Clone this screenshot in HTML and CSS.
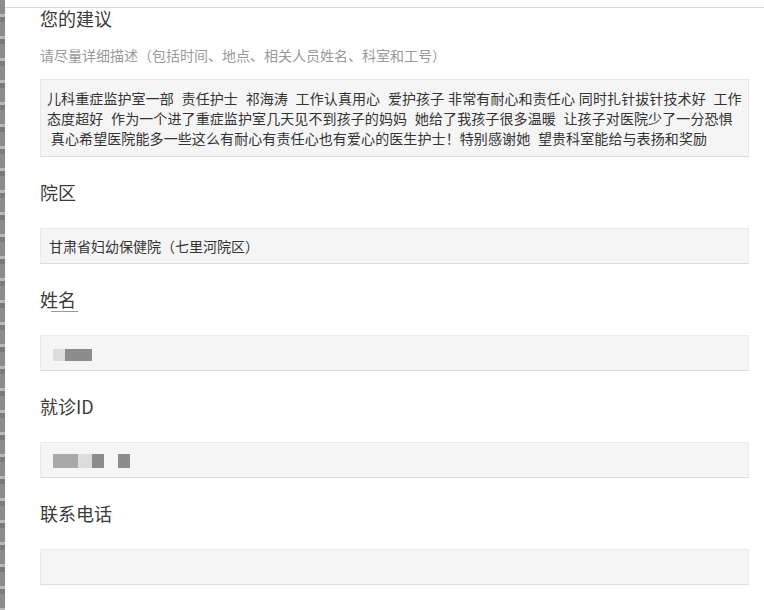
FILE: index.html
```html
<!DOCTYPE html>
<html>
<head>
  <meta charset="utf-8">
  <title>您的建议</title>
  <link rel="stylesheet" href="styles.css">
</head>
<body>
  <div class="page">
    <div class="edge"></div>
    <div class="main">
      <div class="topbar"></div>
      <form class="form">
        <h2 class="title">您的建议</h2>
        <p class="hint">请尽量详细描述（包括时间、地点、相关人员姓名、科室和工号）</p>
        <div class="textarea">儿科重症监护室一部  责任护士  祁海涛  工作认真用心  爱护孩子 非常有耐心和责任心 同时扎针拔针技术好  工作<br>态度超好  作为一个进了重症监护室几天见不到孩子的妈妈  她给了我孩子很多温暖  让孩子对医院少了一分恐惧<br> 真心希望医院能多一些这么有耐心有责任心也有爱心的医生护士！特别感谢她  望贵科室能给与表扬和奖励</div>

        <div class="field">
          <label class="label">院区</label>
          <div class="input">甘肃省妇幼保健院（七里河院区）</div>
        </div>

        <div class="field">
          <label class="label"><span class="mark">姓名</span></label>
          <div class="input">
            <span class="blur light w12"></span><span class="blur dark w27"></span>
          </div>
        </div>

        <div class="field">
          <label class="label">就诊ID</label>
          <div class="input">
            <span class="blur mid w25 tall"></span><span class="blur light w14 tall"></span><span class="blur dark w12 tall"></span><span class="gap"></span><span class="blur dark w12 tall"></span>
          </div>
        </div>

        <div class="field">
          <label class="label">联系电话</label>
          <div class="input"></div>
        </div>
      </form>
    </div>
  </div>
</body>
</html>
```

FILE: styles.css
```css
html, body {
  margin: 0;
  padding: 0;
  background: #fff;
}
body {
  font-family: "Noto Sans CJK SC", "Noto Sans", sans-serif;
  color: #333;
}
.page {
  display: flex;
  min-height: 610px;
}
.edge {
  width: 5px;
  flex: none;
  background: repeating-linear-gradient(180deg, #8c8c8c 0, #8c8c8c 14px, #b8b8b8 14px, #b8b8b8 17px, #7a7a7a 17px, #7a7a7a 22px);
}
.main {
  flex: 1;
}
.topbar {
  height: 7px;
  border-bottom: 1px solid #dadada;
}
.form {
  padding: 0 16px 0 35px;
}
.title {
  margin: 0;
  font-size: 18px;
  font-weight: normal;
  line-height: 20px;
  color: #3a3a3a;
}
.hint {
  margin: 17px 0 0;
  font-size: 14px;
  line-height: 20px;
  color: #999;
}
.textarea {
  margin-top: 14px;
  padding: 8px 6px;
  background: #f5f5f5;
  border: 1px solid #e6e6e6;
  border-bottom-color: #dcdcdc;
  font-size: 14px;
  line-height: 20px;
  letter-spacing: 0.1px;
  word-spacing: 0.6px;
  white-space: pre;
  color: #333;
}
.field {
  margin-top: 23px;
}
.label {
  display: block;
  font-size: 18px;
  line-height: 24px;
  color: #3a3a3a;
}
.mark {
  display: inline-block;
  position: relative;
}
.mark::after {
  content: "";
  position: absolute;
  left: 11px;
  right: -2px;
  bottom: -1px;
  height: 1px;
  background: #999;
}
.input {
  margin-top: 24px;
  height: 34px;
  padding: 0 8px;
  display: flex;
  align-items: center;
  background: #f5f5f5;
  border: 1px solid #ebebeb;
  border-bottom-color: #dcdcdc;
  font-size: 14px;
  color: #333;
}
.blur {
  display: inline-block;
  height: 12px;
  margin-top: 4px;
  filter: blur(0.4px);
}
.blur.tall {
  height: 14px;
  margin-top: 2px;
}
.blur.light { background: #dcdcdc; }
.blur.mid { background: #a9a9a9; }
.blur.dark { background: #8c8c8c; }
.w12 { width: 12px; }
.w14 { width: 14px; }
.w25 { width: 25px; }
.w27 { width: 27px; }
.gap {
  display: inline-block;
  width: 14px;
}
.blur:first-child {
  margin-left: 4px;
}
```
